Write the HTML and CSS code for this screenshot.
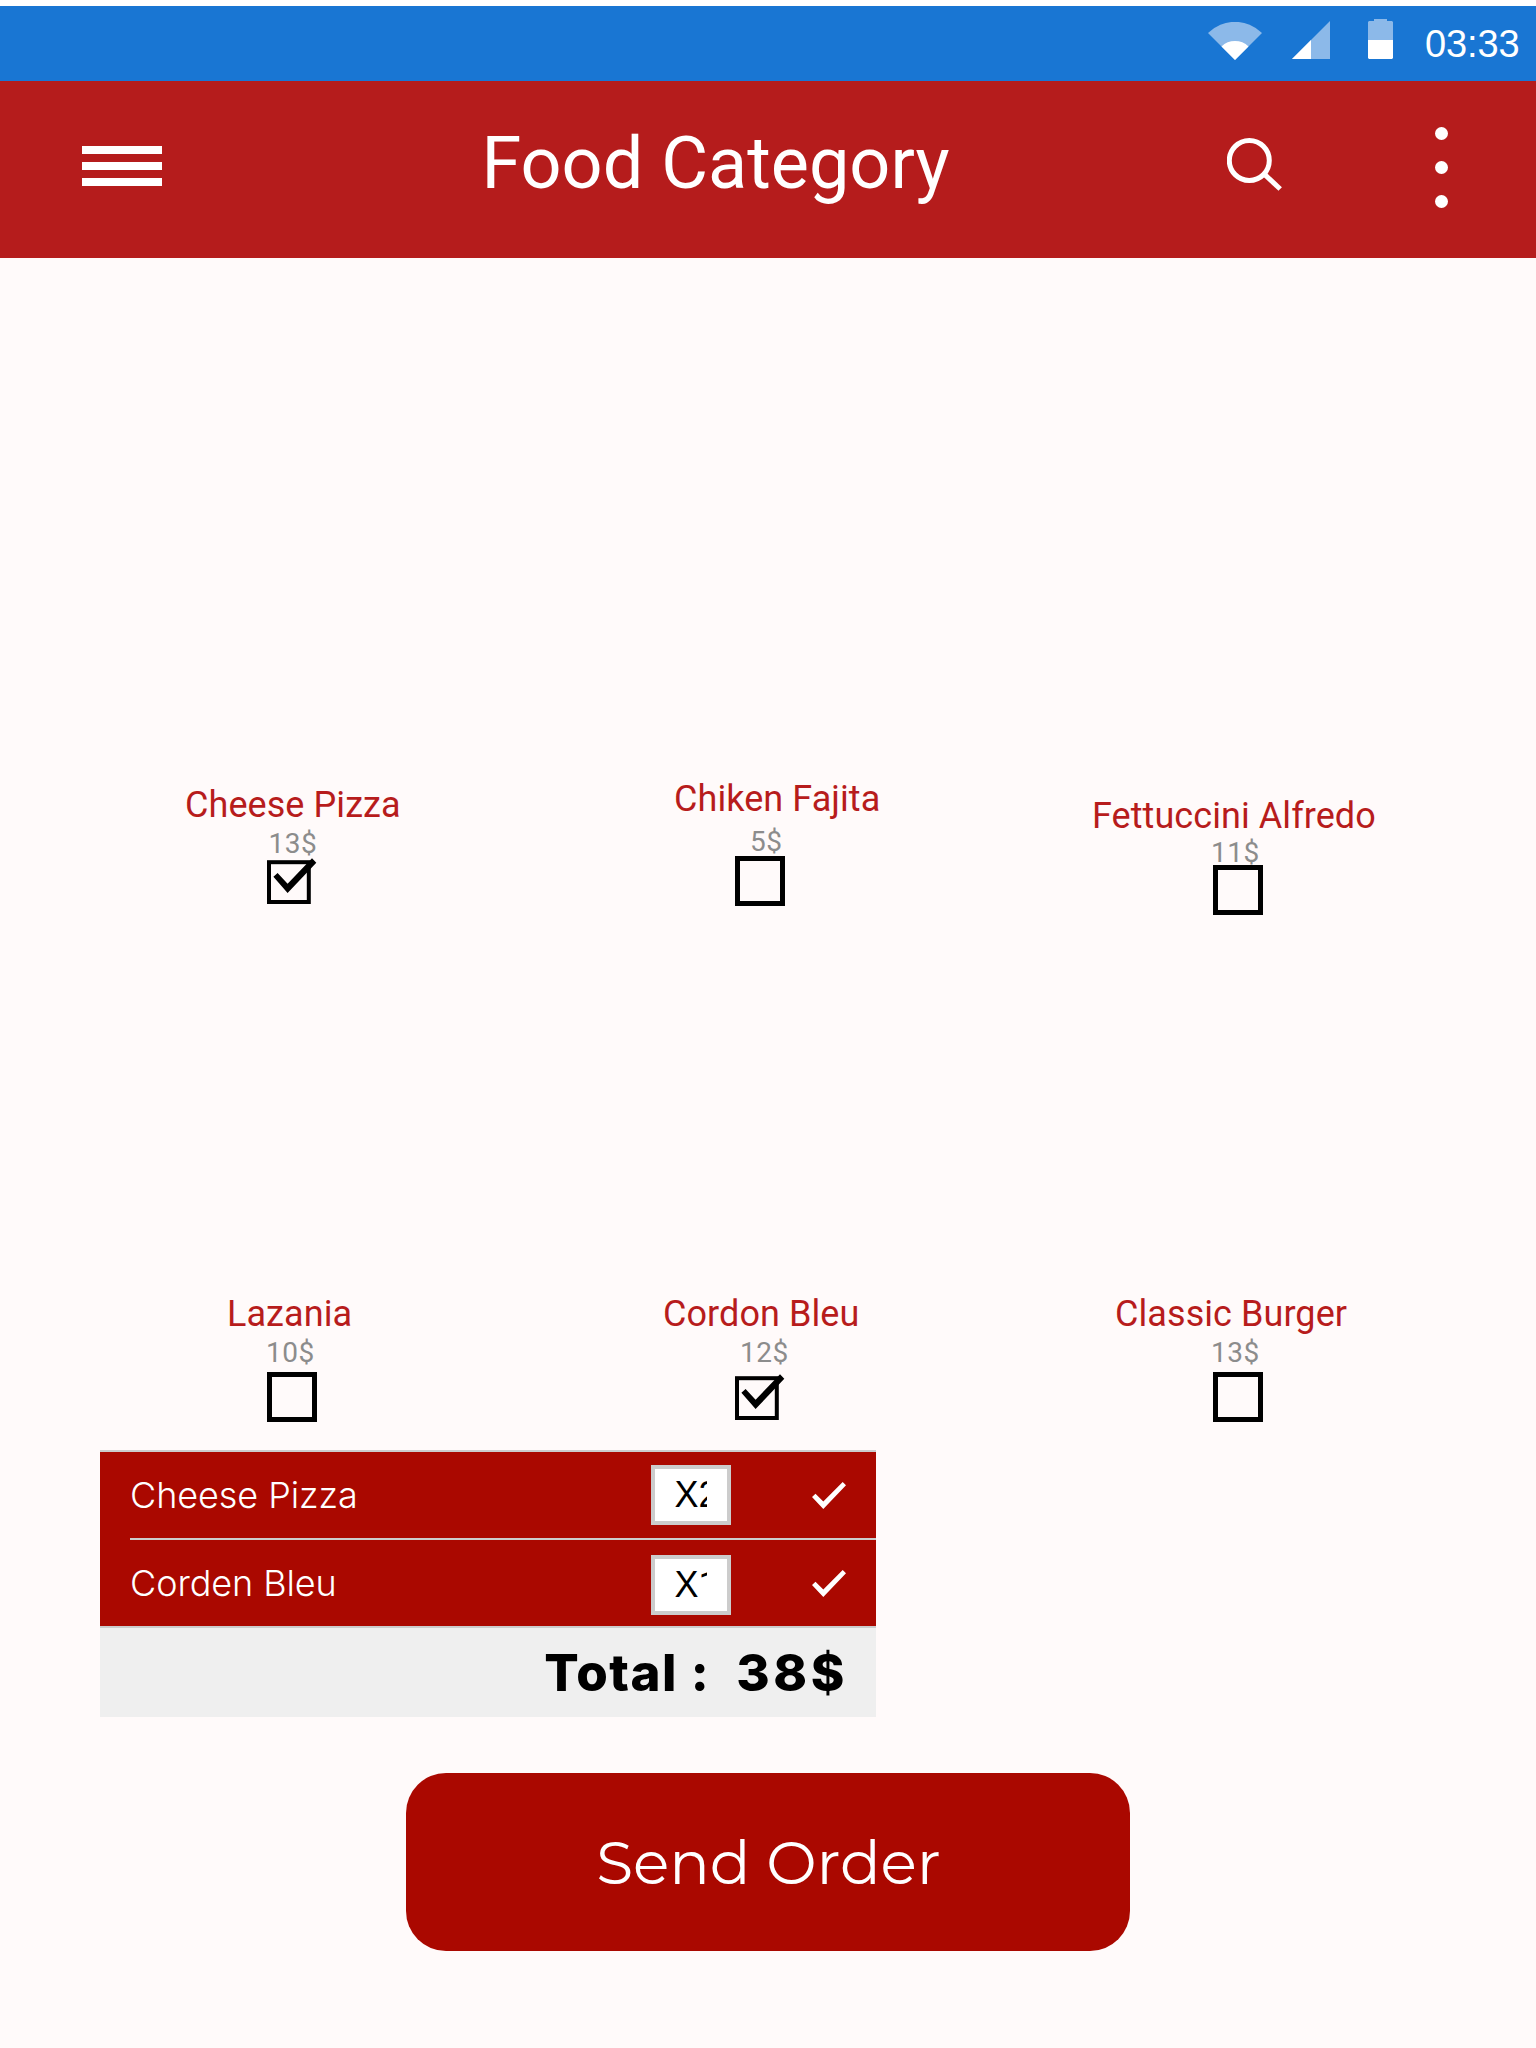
FILE: index.html
```html
<!DOCTYPE html>
<html lang="en">
<head>
<meta charset="utf-8">
<title>Food Category</title>
<link rel="stylesheet" href="styles.css">
</head>
<body>
<header>
  <div class="status-bar">
    <svg class="wifi" width="54" height="38" viewBox="0 0 54 38"><path class="dim" d="M27 38 0 11a38.2 38.2 0 0 1 54 0z"/><path d="M27 38 13.5 24.5a19.1 19.1 0 0 1 27 0z"/></svg>
    <svg class="signal" width="38" height="38" viewBox="0 0 38 38"><path class="dim" d="M0 38 38 0V38z"/><path d="M0 38 19 19V38z"/></svg>
    <svg class="battery" width="25" height="40" viewBox="0 0 25 40"><path class="dim" d="M6 0h13v2h5l1 1v18H0V3l1-1h5z"/><path d="M0 21h25v18l-1 1H1l-1-1z"/></svg>
    <span class="clock">03:33</span>
  </div>
  <div class="app-bar">
    <div class="menu"><i></i><i></i><i></i></div>
    <h1 class="title">Food Category</h1>
    <svg class="search" width="55" height="53" viewBox="0 0 55 53"><circle cx="22.3" cy="22.5" r="20"/><path d="M37.8 36.6 53.2 51"/></svg>
    <div class="more"><i></i><i></i><i></i></div>
  </div>
</header>
<main>
  <section class="row row-first">
    <article class="item cheese"><h2>Cheese Pizza</h2><p>13$</p><svg class="box" viewBox="0 0 50 50"><rect x="2" y="6.2" width="39.8" height="39.8"/><path d="M6.4 20.7 10.6 17l10 10.7L45 2.3l4.3 4.4L20.6 37z"/></svg></article>
    <article class="item fajita"><h2>Chiken Fajita</h2><p>5$</p><svg class="box open" viewBox="0 0 50 50"><rect x="2.5" y="2.5" width="45" height="45"/></svg></article>
    <article class="item alfredo"><h2>Fettuccini Alfredo</h2><p>11$</p><svg class="box open" viewBox="0 0 50 50"><rect x="2.5" y="2.5" width="45" height="45"/></svg></article>
  </section>
  <section class="row row-second">
    <article class="item lazania"><h2>Lazania</h2><p>10$</p><svg class="box open" viewBox="0 0 50 50"><rect x="2.5" y="2.5" width="45" height="45"/></svg></article>
    <article class="item cordon"><h2>Cordon Bleu</h2><p>12$</p><svg class="box" viewBox="0 0 50 50"><rect x="2" y="6.2" width="39.8" height="39.8"/><path d="M6.4 20.7 10.6 17l10 10.7L45 2.3l4.3 4.4L20.6 37z"/></svg></article>
    <article class="item burger"><h2>Classic Burger</h2><p>13$</p><svg class="box open" viewBox="0 0 50 50"><rect x="2.5" y="2.5" width="45" height="45"/></svg></article>
  </section>
  <section class="order">
    <div class="line"><span class="name">Cheese Pizza</span><div class="qty"><span>X2</span></div><svg class="tick" width="34" height="27" viewBox="0 0 34 27"><path d="M0 15 3.5 11.7 11.3 19.5 30.7 0 34 3.3 11.3 27z"/></svg></div>
    <div class="line last"><span class="name">Corden Bleu</span><div class="qty"><span>X<b>1</b></span></div><svg class="tick" width="34" height="27" viewBox="0 0 34 27"><path d="M0 15 3.5 11.7 11.3 19.5 30.7 0 34 3.3 11.3 27z"/></svg></div>
    <div class="total"><span>Total :</span><span class="sum">38$</span></div>
  </section>
  <button class="send">Send Order</button>
</main>
</body>
</html>
```
FILE: styles.css
```css
* { box-sizing: border-box; }
body { margin: 0; padding-top: 6px; background: linear-gradient(#fff 6px, #fffafa 6px); font-family: Roboto, sans-serif; min-height: 2048px; }
h1, h2, p { margin: 0; font-weight: 400; }
svg { display: block; flex: none; }

.status-bar { display: flex; align-items: flex-start; height: 75px; background: #1976d3; color: #fff; }
.status-bar svg { fill: #fff; }
.status-bar .dim { fill: #8cb9e9; }
.wifi { margin: 16px 0 0 1208px; }
.signal { margin: 15px 0 0 30px; }
.battery { margin: 13px 0 0 38px; }
.clock { margin: 16px 0 0 32px; font: 38px/44px "Liberation Sans", sans-serif; letter-spacing: -.1px; }

.app-bar { display: flex; align-items: flex-start; height: 177px; background: #b51c1c; color: #fff; }
.menu { display: flex; flex-direction: column; gap: 8px; margin: 65px 0 0 82px; }
.menu i { width: 80px; height: 8px; background: #fff; }
.title { width: 745px; margin: 41px 0 0 319px; font-size: 72px; line-height: 84px; text-indent: .5px; white-space: nowrap; }
.search { margin: 57px 0 0 1px; fill: none; stroke: #fff; stroke-width: 5; }
.more { display: flex; flex-direction: column; gap: 21px; margin: 46px 0 0 153px; }
.more i { width: 13px; height: 13px; border-radius: 50%; background: #fff; }

.row { display: grid; grid-template-columns: repeat(3, 512px); align-items: start; }
.row-first { height: 1036px; padding-top: 521px; }
.row-second { height: 156px; }
.item h2 { color: #b71c1c; font-size: 36px; line-height: 40px; height: 40px; letter-spacing: .07px; text-indent: 1px; white-space: nowrap; }
.item p { color: #8c8c8c; font-size: 28px; line-height: 31px; height: 31px; letter-spacing: .5px; margin-top: 3px; }
.box { width: 50px; height: 50px; fill: none; stroke: #000; stroke-width: 4; margin-top: 4px; }
.box path { fill: #000; stroke: none; }
.open { stroke-width: 5; }
.cheese { padding: 6px 0 0 184px; }
.cheese p { margin-left: 84.5px; }
.cheese .box { margin: -3px 0 0 83px; }
.fajita { padding-left: 161px; }
.fajita p { margin: 7px 0 0 77px; }
.fajita .box { margin: -1px 0 0 62px; }
.alfredo { padding: 17px 0 0 68px; }
.alfredo h2, .burger h2 { text-indent: 0; }
.alfredo p { margin: 1px 0 0 119px; }
.alfredo .box { margin: -3px 0 0 121px; }
.lazania { padding-left: 226px; }
.lazania p { margin-left: 40px; }
.lazania .box { margin-left: 41px; }
.cordon { padding-left: 150px; }
.cordon p { margin-left: 78px; }
.cordon .box { margin-left: 73px; }
.burger { padding-left: 91px; }
.burger p { margin-left: 96px; }
.burger .box { margin-left: 98px; }

.order { width: 776px; margin-left: 100px; border-top: 2px solid #ccc; background: #aa0800; font-family: Inter, sans-serif; }
.line { display: flex; align-items: flex-start; height: 88px; margin-left: 30px; border-bottom: 2px solid #ccc; color: #fff; }
.last { margin-left: 0; padding-left: 30px; }
.name { width: 521px; padding-top: 21px; font-size: 36px; line-height: 44px; font-weight: 300; letter-spacing: -.08px; white-space: nowrap; }
.qty { width: 80px; height: 60px; margin-top: 13px; padding: 4px 20px; border: 4px solid #ccc; background: #fff; color: #000; font: 36px/44px "Liberation Sans", sans-serif; }
.qty span { display: block; width: 32px; height: 44px; overflow: hidden; text-indent: -.5px; }
.qty b { font: 400 36px/1 Roboto, sans-serif; }
.last .qty { margin-top: 15px; }
.tick { margin: 30px 0 0 81px; fill: #fff; }
.total { display: flex; justify-content: flex-end; gap: 26px; height: 89px; padding: 13px 28px 0 0; background: #efefef; font-size: 51px; line-height: 64px; font-weight: 800; letter-spacing: 1.5px; }
.sum { letter-spacing: 3.6px; }

.send { display: block; width: 724px; height: 178px; margin: 56px 0 0 406px; padding: 1px 0 0 1px; border: 0; border-radius: 40px; background: #aa0800; color: #fff; font: 400 60px/74px Montserrat, Inter, sans-serif; }
```
